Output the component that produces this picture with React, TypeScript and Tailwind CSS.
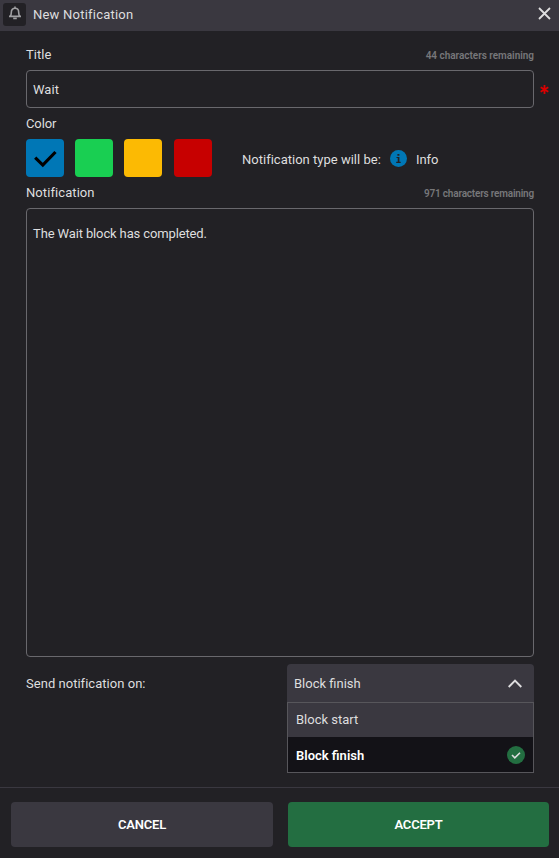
import type { ReactNode } from "react";

const swatches = [
  { name: "blue", cls: "bg-[#0077b6]" },
  { name: "green", cls: "bg-[#19cf52] ml-[11px]" },
  { name: "yellow", cls: "bg-[#fcba03] ml-[11px]" },
  { name: "red", cls: "bg-[#c70000] ml-[12px]" },
];

function Label({ children, remaining }: { children: ReactNode; remaining?: ReactNode }) {
  return (
    <div className="flex h-5 items-center justify-between">
      {children}
      {remaining && <span className="mt-px text-[10px] font-semibold text-[#77777a]">{remaining}</span>}
    </div>
  );
}

export default function App() {
  return (
    <div className="flex h-[858px] w-[559px] flex-col bg-[#222125] font-['Roboto','Liberation_Sans',sans-serif] text-[13px] leading-5 tracking-[0px] text-[#dededf]">
      <header className="flex h-[31px] shrink-0 items-center bg-[#3a3840] pr-2 pl-[3px] pb-[3px]">
        <div className="flex h-[23px] w-[23px] items-center justify-center rounded-[3px] bg-[#222125]">
          <svg className="-mt-[2px]" width="14" height="14" viewBox="0 0 14 14" fill="none" stroke="#a0a0a3" strokeWidth="1.6">
            <path d="M1 10.4h12M2.2 10.2C3.2 9.1 3.3 8 3.3 6.4 3.3 3.9 4.8 2.3 7 2.3s3.7 1.6 3.7 4.1c0 1.6.1 2.7 1.1 3.8M7 .5v1.8" />
            <path d="M5.2 12.4h3.6" strokeWidth="1.7" />
          </svg>
        </div>
        <span className="ml-[7px] mt-px tracking-[0.22px]">New Notification</span>
        <svg className="-mt-px ml-auto" width="13" height="13" viewBox="0 0 13 13" stroke="#dededf" strokeWidth="1.8">
          <path d="M1 1l11 11M12 1L1 12" />
        </svg>
      </header>

      <main className="flex flex-1 flex-col pt-[14px] pr-[25px] pl-[26px]">
        <Label remaining={<span className="tracking-[-0.03px]">44 characters remaining</span>}>
          <span className="tracking-[0.05px]">Title</span>
        </Label>
        <div className="relative mt-[5px] flex h-[38px] items-center rounded-[4px] border border-[#69686d] px-[6px] pt-px">
          <span className="mt-px tracking-[0.05px]">Wait</span>
          <svg className="absolute top-[14px] -right-[16px]" width="9" height="9" viewBox="0 0 9 9" stroke="#dc0000" strokeWidth="1.8">
            <path d="M4.5 0v9M.7 2.3l7.6 4.4M8.3 2.3L.7 6.7" />
          </svg>
        </div>

        <div className="mt-[6px]">
          <Label>
            <span className="tracking-[-0.1px]">Color</span>
          </Label>
        </div>
        <div className="mt-[5px] flex h-[38px] items-center">
          {swatches.map((s, i) => (
            <div key={s.name} className={`flex h-[38px] w-[38px] items-center justify-center rounded-[4px] ${s.cls}`}>
              {i === 0 && (
                <svg width="38" height="38" viewBox="0 0 38 38" fill="none" stroke="#000" strokeWidth="3.2">
                  <path d="M9.2 18.7l7.6 7.4L29.5 13" />
                </svg>
              )}
            </div>
          ))}
          <span className="mt-[3px] ml-[30px] w-[139px] whitespace-nowrap tracking-[0.01px]">Notification type will be:</span>
          <svg className="mt-px ml-[9px]" width="17" height="17" viewBox="0 0 17 17">
            <circle cx="8.5" cy="8.5" r="8.5" fill="#0077b6" />
            <path d="M7.4 4h2v1.7h-2zM6.5 7h2.9v4.8h1.3v1.1H6.2v-1.1h1.5V8.1H6.5z" fill="#222125" />
          </svg>
          <span className="mt-[3px] ml-[9px] tracking-[-0.1px]">Info</span>
        </div>

        <div className="mt-[6px]">
          <Label remaining={<span className="tracking-[-0.2px]">971 characters remaining</span>}>
            <span className="tracking-[0.08px]">Notification</span>
          </Label>
        </div>
        <div className="mt-[5px] h-[449px] rounded-[4px] border border-[#69686d] px-[6px] pt-[15px] tracking-[-0.13px]">
          The Wait block has completed.
        </div>

        <div className="mt-[7px] flex justify-between">
          <span className="mt-[10px] tracking-[0.03px]">Send notification on:</span>
          <div className="w-[247px]">
            <div className="flex h-[38px] items-center justify-between rounded-t-[4px] bg-[#3a3840] pr-3 pl-[7px]">
              <span className="mt-[2px]">Block finish</span>
              <svg width="14" height="9" viewBox="0 0 14 9" fill="none" stroke="#dededf" strokeWidth="1.9">
                <path d="M.7 8L7 1.7 13.3 8" />
              </svg>
            </div>
            <div className="border border-[#57565b]">
              <div className="flex h-[34px] items-center bg-[#3a3840] pl-2">Block start</div>
              <div className="flex h-[35px] items-center justify-between bg-[#131217] pr-2 pl-2 font-semibold text-white">
                <span className="mt-[2px]">Block finish</span>
                <svg width="18" height="18" viewBox="0 0 18 18" fill="none">
                  <circle cx="9" cy="9" r="9" fill="#236e41" />
                  <path d="M5 9l2.8 2.8L13 6.7" stroke="#dededf" strokeWidth="1.6" />
                </svg>
              </div>
            </div>
          </div>
        </div>
      </main>

      <footer className="flex h-[71px] shrink-0 gap-[15px] border-t border-[#3a3840] pt-[14px] pr-[10px] pl-[11px] font-semibold tracking-[-0.2px] text-white">
        <button className="h-[45px] w-[262px] rounded-[4px] bg-[#3a3840] pt-px">CANCEL</button>
        <button className="h-[45px] w-[261px] rounded-[4px] bg-[#236e41] pt-px">ACCEPT</button>
      </footer>
    </div>
  );
}
